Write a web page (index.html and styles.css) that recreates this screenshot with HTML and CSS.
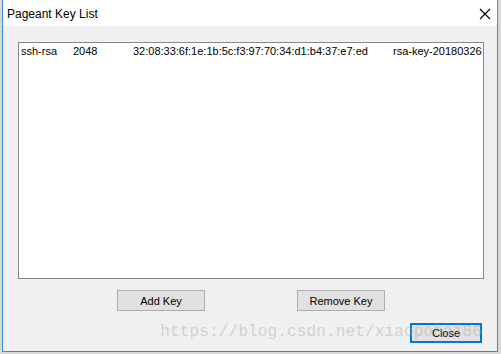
FILE: index.html
```html
<!DOCTYPE html>
<html>
<head>
    <meta charset="utf-8" />
    <title>Pageant Key List</title>
    <link rel="stylesheet" href="styles.css">
</head>
<body>
    <div class="win">
        <div class="win_title">
            <span class="win_caption">Pageant Key List</span>
            <svg class="win_close" width="12" height="12" viewBox="0 0 12 12">
                <path d="M1 1 L11 11 M11 1 L1 11" stroke="#000" stroke-width="1.1" fill="none" />
            </svg>
        </div>
        <div class="win_body">
            <div class="key_list">
                <div class="key_row">
                    <span class="col_type">ssh-rsa</span>
                    <span class="col_bits">2048</span>
                    <span class="col_fp">32:08:33:6f:1e:1b:5c:f3:97:70:34:d1:b4:37:e7:ed</span>
                    <span class="col_name">rsa-key-20180326</span>
                </div>
            </div>
            <div class="btn_row">
                <button class="btn">Add Key</button>
                <button class="btn">Remove Key</button>
            </div>
            <div class="btn_foot">
                <span class="watermark">https://blog.csdn.net/xiaopohai86</span>
                <button class="btn btn_close">Close</button>
            </div>
        </div>
    </div>
</body>
</html>
```

FILE: styles.css
```css
html, body {
    margin: 0;
    padding: 0;
}

body {
    width: 501px;
    height: 354px;
    overflow: hidden;
    background: #d9d9d9;
    padding-left: 2px;
    box-sizing: border-box;
    font-family: "Liberation Sans", Arial, sans-serif;
}

.win {
    width: 496px;
    height: 352px;
    box-sizing: border-box;
    border: 1px solid #3c88e0;
    border-top: 0;
    background: #f0f0f0;
    display: flex;
    flex-direction: column;
}

.win_title {
    height: 26px;
    background: #fff;
    display: flex;
    align-items: center;
    justify-content: space-between;
    padding: 0 6px 0 4px;
}

.win_caption {
    font-size: 12px;
    color: #000;
    padding-top: 1px;
}

.win_close {
    margin-top: 1px;
}

.win_body {
    flex: 1;
    display: flex;
    flex-direction: column;
    padding: 16px 13px 0 15px;
}

.key_list {
    height: 237px;
    box-sizing: border-box;
    border: 1px solid #828790;
    background: #fff;
    font-size: 11px;
    color: #000;
}

.key_row {
    display: flex;
    padding: 2px 0 0 2px;
    white-space: nowrap;
}

.col_type {
    width: 52px;
}

.col_bits {
    width: 60px;
}

.col_fp {
    width: 260px;
}

.col_name {
    flex: 1;
}

.btn_row {
    display: flex;
    gap: 92px;
    margin-top: 11px;
    padding-left: 99px;
}

.btn {
    height: 21px;
    width: 88px;
    box-sizing: border-box;
    border: 1px solid #adadad;
    background: #e1e1e1;
    font-family: "Liberation Sans", Arial, sans-serif;
    font-size: 11px;
    color: #000;
    padding: 0;
}

.btn_foot {
    display: flex;
    justify-content: flex-end;
    align-items: center;
    position: relative;
    margin-top: 12px;
    padding-right: 2px;
}

.btn_close {
    width: 72px;
    height: 20px;
    border: 2px solid #0078d7;
}

.watermark {
    position: absolute;
    right: 2px;
    top: 0px;
    font-family: "Liberation Mono", monospace;
    font-size: 16px;
    letter-spacing: 0.15px;
    color: rgba(170, 170, 170, 0.45);
    pointer-events: none;
    z-index: 1;
}
```
